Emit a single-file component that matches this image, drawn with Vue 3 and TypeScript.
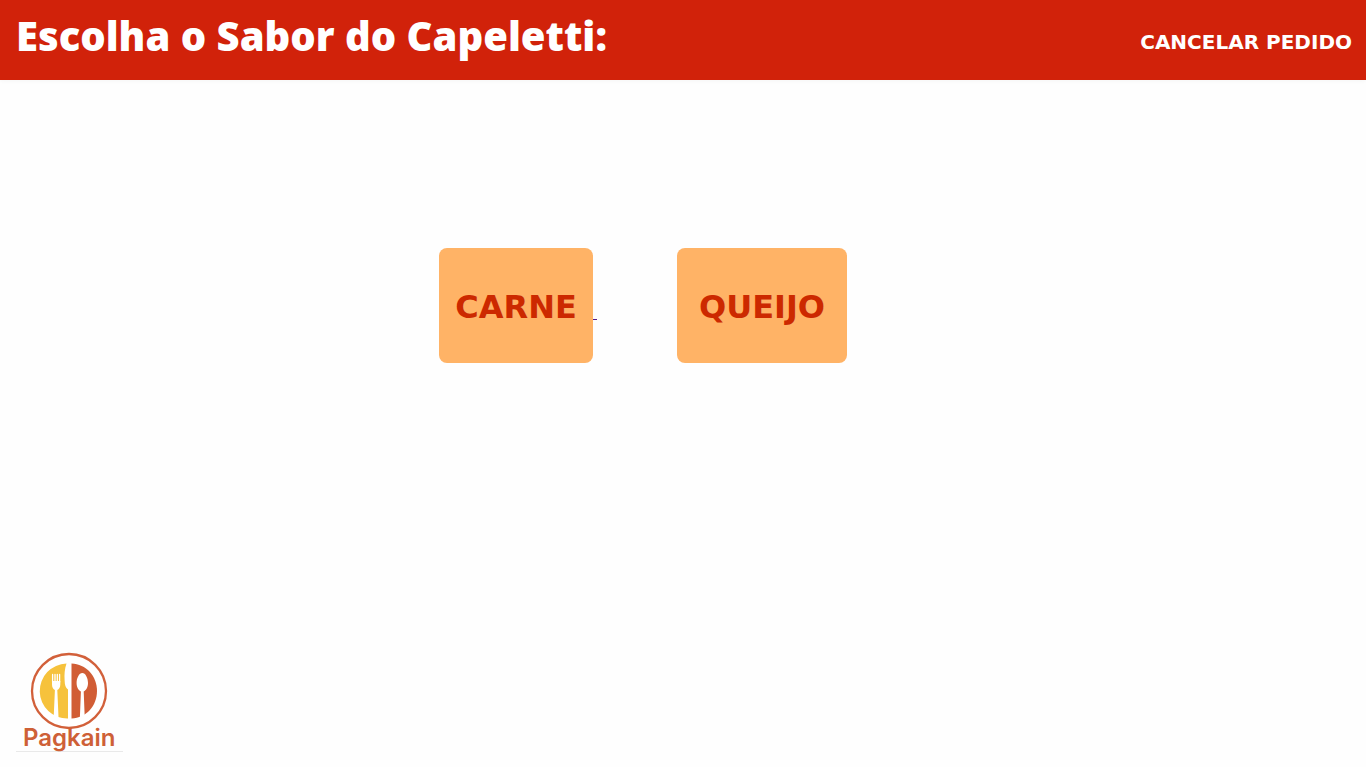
<script setup lang="ts">
interface Flavor {
  name: string
  slug: string
  trailingSpace: boolean
}

const flavors: Flavor[] = [
  { name: 'CARNE', slug: 'carne', trailingSpace: true },
  { name: 'QUEIJO', slug: 'queijo', trailingSpace: false },
]
</script>

<template>
  <div class="page">
    <header class="topbar">
      <h1 class="title">Escolha o Sabor do Capeletti:</h1>
      <a class="cancel" href="#cancelar">CANCELAR PEDIDO</a>
    </header>

    <main class="flavors">
      <a
        v-for="flavor in flavors"
        :key="flavor.slug"
        class="flavor"
        :href="'#' + flavor.slug"
      ><span class="card" :class="flavor.slug">{{ flavor.name }}</span><template v-if="flavor.trailingSpace">&nbsp;</template></a>
    </main>

    <footer class="brand">
      <svg class="logo" width="107" height="102" viewBox="0 0 107 102" role="img" aria-label="Pagkain">
        <circle cx="53" cy="42" r="37" fill="#fff" stroke="#d2603a" stroke-width="2.3" />
        <path d="M50.500 14.500C48.500 20 48.300 26 48.600 31C48.800 36 49.500 39 52 40.500V69.500A27.500 27.500 0 0 1 50.500 14.500Z" fill="#f6c23c" />
        <path d="M55.500 14.500C70 15 81 27 81 42C81 57 70 69 55.500 69.500Z" fill="#d15d35" />
        <path d="M36.600 25.500V33M39 25.500V33M41.300 25.500V33M43.600 25.500V33" stroke="#fff" stroke-width="1.300" stroke-linecap="round" />
        <path d="M36 32H44.300V35.500C44.300 38.500 43 40 41.300 41L42.500 68H37.700L38.900 41C37.200 40 36 38.500 36 35.500Z" fill="#fff" />
        <path d="M66.300 24C69.500 24 72 29 72 34C72 38 70 41.500 67.700 42.500L68.700 68H63.900L64.900 42.500C62.600 41.500 60.600 38 60.600 34C60.600 29 63.100 24 66.300 24Z" fill="#fff" />
        <text class="wordmark" x="7" y="97">Pagkain</text>
      </svg>
    </footer>
  </div>
</template>

<style>
body {
  background: #fefefe;
}
</style>

<style scoped>
.page {
  display: flex;
  flex-direction: column;
  min-height: 100vh;
  box-sizing: border-box;
  font-family: Verdana, "DejaVu Sans", sans-serif;
}

.topbar {
  display: flex;
  justify-content: space-between;
  align-items: flex-start;
  padding: 12px 14px 20px 16px;
  background: #d1220a;
  box-shadow: 0 1px 4px rgba(0, 0, 0, 0.04);
}

.title {
  margin: 0;
  font-family: "Gill Sans MT", "Open Sans", sans-serif;
  font-size: 40px;
  font-weight: 800;
  line-height: 48px;
  color: #fff;
}

.cancel {
  margin-top: 18px;
  font-size: 20px;
  font-weight: 700;
  line-height: 24px;
  color: #fff;
  text-decoration: none;
}

.flavors {
  display: flex;
  justify-content: center;
  margin-top: 168px;
}

.flavor {
  margin-right: 80px;
  font-family: "Liberation Serif", serif;
  font-size: 16px;
  color: #551a8b;
  text-decoration: underline;
}

.card {
  display: inline-block;
  box-sizing: border-box;
  padding: 40px 16px 36px;
  border-radius: 8px;
  background: #ffb366;
  color: #cc2900;
  font-family: Verdana, "DejaVu Sans", sans-serif;
  font-size: 32px;
  font-weight: 700;
  line-height: 39px;
  text-align: center;
}

.carne {
  min-width: 154px;
}

.queijo {
  min-width: 170px;
}

.brand {
  align-self: flex-start;
  margin: auto 0 15px 16px;
  border-bottom: 1px solid #e9e9e9;
}

.logo {
  display: block;
  overflow: visible;
}

.wordmark {
  fill: #ce6037;
  font-family: Inter, sans-serif;
  font-size: 24px;
  font-weight: 600;
}
</style>
